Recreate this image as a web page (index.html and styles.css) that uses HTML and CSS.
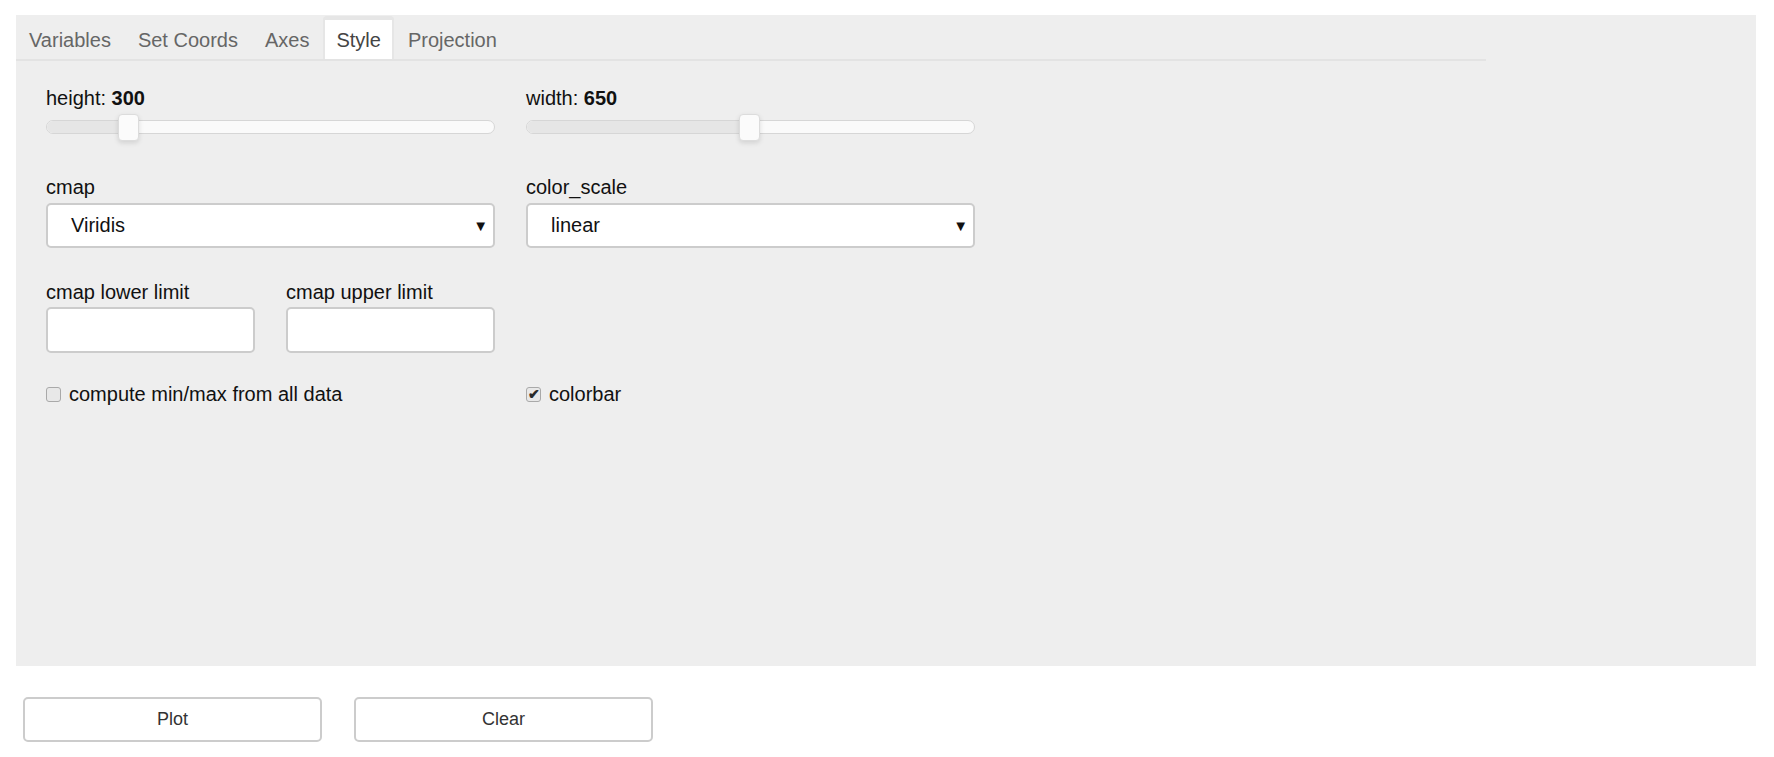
FILE: index.html
```html
<!DOCTYPE html>
<html lang="en">
<head>
  <meta charset="UTF-8" />
  <title>Plot settings</title>
  <link rel="stylesheet" href="styles.css">
</head>
<body>

  <div class="panel">
    <ul class="tabs">
      <li class="tab">Variables</li>
      <li class="tab">Set Coords</li>
      <li class="tab">Axes</li>
      <li class="tab active">Style</li>
      <li class="tab">Projection</li>
    </ul>

    <div class="pane">
      <div class="field">
        <label>height: <b>300</b></label>
        <div class="slider">
          <div class="track"><div class="fill" style="width: 82px"></div></div>
          <span class="handle" style="left: 72px"></span>
        </div>
      </div>
      <div class="field">
        <label>width: <b>650</b></label>
        <div class="slider">
          <div class="track"><div class="fill" style="width: 223px"></div></div>
          <span class="handle" style="left: 213px"></span>
        </div>
      </div>

      <div class="field gap">
        <label>cmap</label>
        <div class="select">Viridis<span class="caret">&#9660;</span></div>
      </div>
      <div class="field gap">
        <label>color_scale</label>
        <div class="select">linear<span class="caret">&#9660;</span></div>
      </div>

      <div class="field gap limits">
        <div>
          <label>cmap lower limit</label>
          <input type="text" class="text-input" />
        </div>
        <div>
          <label>cmap upper limit</label>
          <input type="text" class="text-input" />
        </div>
      </div>
      <div class="field gap"></div>

      <div class="check-row">
        <span class="box"></span> compute min/max from all data
      </div>
      <div class="check-row">
        <span class="box checked">&#10004;</span> colorbar
      </div>
    </div>
  </div>

  <div class="actions">
    <button class="btn">Plot</button>
    <button class="btn">Clear</button>
  </div>

</body>
</html>
```

FILE: styles.css
```css
body {
  margin: 0;
  font-family: "Liberation Sans", Arial, sans-serif;
  color: #111;
  background: white;
}
.panel {
  margin: 15px 18px 0 16px;
  height: 651px;
  background: #eeeeee;
}
.tabs {
  list-style: none;
  margin: 0;
  padding: 1px 0 0 0;
  width: 1470px;
  display: flex;
  border-bottom: 2px solid #e3e3e3;
}
.tab {
  font-size: 20px;
  line-height: 27px;
  padding: 7px 11px 5px 11px;
  margin-right: 1px;
  border: 2px solid transparent;
  border-top-width: 4px;
  border-bottom: none;
  border-radius: 4px 4px 0 0;
  color: #666;
}
.tab.active {
  background: white;
  border-color: #e6e6e6;
  color: #444;
}
.pane {
  padding: 23px 0 0 30px;
  display: grid;
  grid-template-columns: 449px 449px;
  column-gap: 31px;
}
.field label {
  display: block;
  font-size: 20px;
  line-height: 28px;
}
.field.gap {
  margin-top: 32px;
}
.limits.gap {
  margin-top: 30px;
}
.slider {
  position: relative;
  height: 27px;
  margin-top: 2px;
}
.track {
  position: relative;
  top: 6px;
  height: 14px;
  box-sizing: border-box;
  border: 1.5px solid #d6d6d6;
  border-radius: 8px;
  background: #fafafa;
  overflow: hidden;
}
.fill {
  height: 100%;
  background: #e6e6e6;
}
.handle {
  position: absolute;
  top: 0;
  width: 21px;
  height: 27px;
  box-sizing: border-box;
  border: 1.5px solid #dcdcdc;
  border-radius: 4px;
  background: #fbfbfb;
  box-shadow: 0 2px 5px rgba(0, 0, 0, 0.12);
}
.select {
  position: relative;
  margin-top: 2px;
  height: 45px;
  box-sizing: border-box;
  border: 2px solid #cccccc;
  border-radius: 5px;
  background: white;
  padding-left: 23px;
  font-size: 20px;
  line-height: 41px;
}
.caret {
  position: absolute;
  right: 5px;
  top: 0;
  font-size: 15px;
}
.limits {
  display: grid;
  grid-template-columns: 209px 209px;
  column-gap: 31px;
}
.text-input {
  display: block;
  margin: 0;
  margin-top: 1px;
  width: 209px;
  height: 46px;
  box-sizing: border-box;
  border: 2px solid #cccccc;
  border-radius: 5px;
  background: white;
}
.check-row {
  margin-top: 27px;
  display: flex;
  align-items: center;
  gap: 8px;
  font-size: 20px;
  line-height: 28px;
}
.box {
  width: 15px;
  height: 15px;
  box-sizing: border-box;
  border: 1.5px solid #a9a9a9;
  border-radius: 3px;
  background: #e8e8e8;
  font-size: 14px;
  font-weight: bold;
  line-height: 13px;
  text-align: center;
  color: #2a2a2a;
  overflow: hidden;
}
.actions {
  display: flex;
  gap: 32px;
  padding: 31px 0 0 23px;
}
.btn {
  width: 299px;
  height: 45px;
  background: white;
  border: 2px solid #cccccc;
  border-radius: 5px;
  font-family: "Liberation Sans", Arial, sans-serif;
  font-size: 18px;
  color: #333;
}
```
